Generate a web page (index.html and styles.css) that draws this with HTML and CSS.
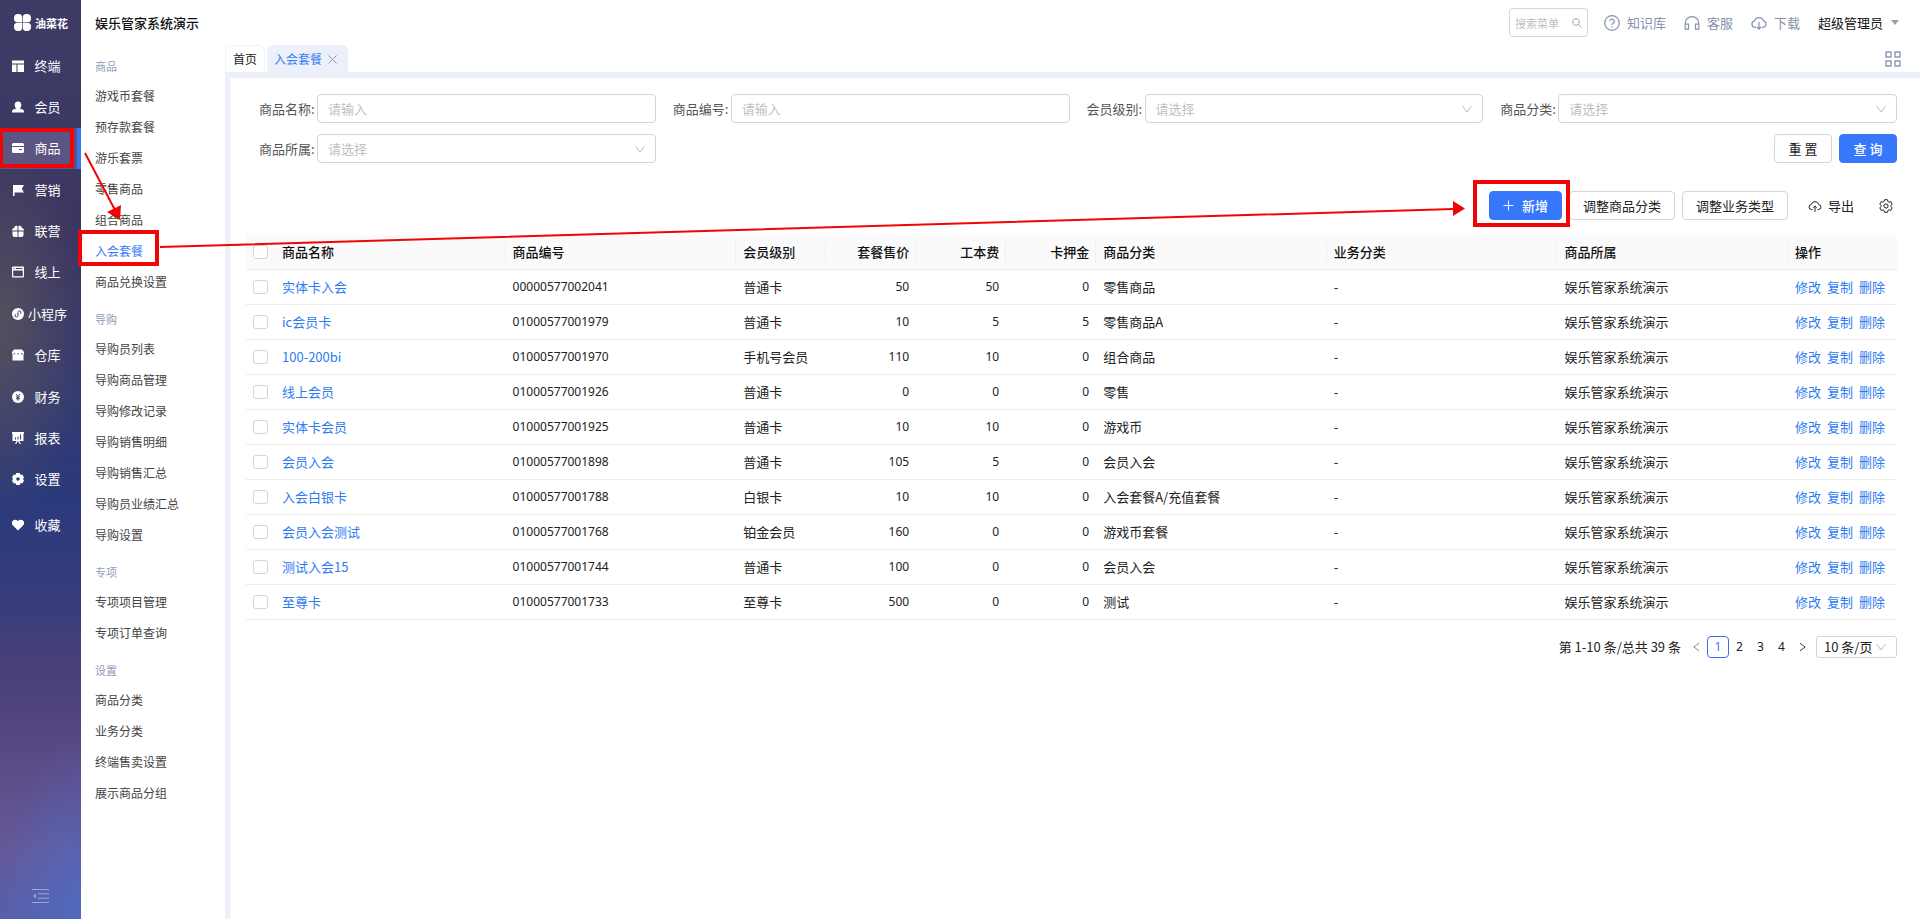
FILE: index.html
```html
<!DOCTYPE html>
<html lang="zh-CN">
<head>
<meta charset="utf-8">
<title>娱乐管家系统演示</title>
<link rel="stylesheet" href="styles.css">
</head>
<body>
<div class="app">
  <nav class="rail" aria-label="主菜单">
    <div class="logo">
      <svg class="logo-mark" viewBox="0 0 17 17" fill="#fff"><path d="M4 0h1a3.5 3.5 0 0 1 3.200 3.500v4.700H3.500A3.500 3.500 0 0 1 0 4.700V4a4 4 0 0 1 4-4z"/><path d="M13 0h-1a3.500 3.500 0 0 0-3.200 3.500v4.700h4.700A3.500 3.500 0 0 0 17 4.700V4a4 4 0 0 0-4-4z"/><path d="M4 17h1a3.500 3.500 0 0 0 3.200-3.500V8.800H3.500A3.500 3.500 0 0 0 0 12.300V13a4 4 0 0 0 4 4z"/><path d="M13 17h-1a3.500 3.500 0 0 1-3.200-3.500V8.800h4.700a3.500 3.500 0 0 1 3.500 3.500V13a4 4 0 0 1-4 4z"/></svg>
      <span>油菜花</span>
    </div>
    <div class="rail-list">
      <a class="rail-item" href="#"><svg viewBox="0 0 12 12"><path d="M0 0.500h12v3H0zM0 4.500h4.500V12H0zM5.500 4.500H12V12H5.500z"/></svg><span>终端</span></a>
      <a class="rail-item" href="#"><svg viewBox="0 0 12 12"><path d="M6 0.500a3.400 3.400 0 0 1 3.300 3.500c0 1.700-.8 2.800-1.800 3.600 2.500.4 4.500 1.400 4.500 2.600V11.500H0v-1.300c0-1.200 2-2.200 4.500-2.600C3.500 6.800 2.700 5.700 2.700 4A3.400 3.400 0 0 1 6 .5z"/></svg><span>会员</span></a>
      <a class="rail-item active" href="#"><svg viewBox="0 0 12 12"><path fill-rule="evenodd" d="M1.500 1h9A1.500 1.500 0 0 1 12 2.500V4H0V2.500A1.500 1.500 0 0 1 1.500 1zM0 5h12v4.500a1.500 1.500 0 0 1-1.500 1.500h-9A1.500 1.500 0 0 1 0 9.500zm7 2v1h3V7z"/></svg><span>商品</span></a>
      <a class="rail-item" href="#"><svg viewBox="0 0 12 12"><path d="M1 1h11L9.800 4.800 12 8.500H2.500V12H1z"/></svg><span>营销</span></a>
      <a class="rail-item" href="#"><svg viewBox="0 0 12 12"><path d="M5.500 1v4.500H0C0 4 1 3.200 2.200 3 2.200 1.500 3.500.300 5.500 1zM6.500 1C8.500.3 9.800 1.500 9.800 3 11 3.200 12 4 12 5.500H6.500zM.500 6.500h5V12h-3a2 2 0 0 1-2-2zM6.500 6.500h5V10a2 2 0 0 1-2 2h-3z"/></svg><span>联营</span></a>
      <a class="rail-item" href="#"><svg viewBox="0 0 12 12"><path fill-rule="evenodd" d="M1 .500h10a1 1 0 0 1 1 1v9a1 1 0 0 1-1 1H1a1 1 0 0 1-1-1v-9a1 1 0 0 1 1-1zM1.200 4.500v5.800h9.600V4.500zM1.500 2v1h1V2zM4 2v1h6.500V2z"/></svg><span>线上</span></a>
      <a class="rail-item" href="#"><svg viewBox="0 0 12 12"><circle cx="6" cy="6" r="6"/><path class="cut" d="M6 7.800a1.500 1.500 0 1 1-1.800-1.600M6 7.800V4.200a1.500 1.500 0 1 1 1.800 1.600"/></svg><span>小程序</span></a>
      <a class="rail-item" href="#"><svg viewBox="0 0 12 12"><path d="M2 .500h8L12 3v2H0V3zM.500 5h11v6.500H.500z"/><path class="cut" d="M1.500 4.800h1.500M5.300 4.800h1.500M9 4.800h1.500"/></svg><span>仓库</span></a>
      <a class="rail-item" href="#"><svg viewBox="0 0 12 12"><circle cx="6" cy="6" r="6"/><path class="cut" d="M4 3l2 2.500L8 3M6 5.500V9.500M4 6h4M4 7.700h4"/></svg><span>财务</span></a>
      <a class="rail-item" href="#"><svg viewBox="0 0 12 12"><path d="M0 0h12v1.500h-.5V9H7.500L9 12H7.700L6.500 9.500h-1L4.300 12H3l1.500-3h-4V1.500H0z"/><path class="cut" d="M3.500 5.500v2M6 4.500v3M8.500 2.500v5"/></svg><span>报表</span></a>
      <a class="rail-item" href="#"><svg viewBox="0 0 12 12"><path fill-rule="evenodd" d="M4.300 0h3.400l.8 1.700 2 .1L12 4.500 11 6l1 1.500-1.500 2.700-2 .1L7.700 12H4.300l-.8-1.700-2-.1L0 7.500 1 6 0 4.500l1.500-2.700 2-.1zM6 4.200a1.800 1.800 0 1 0 0 3.600 1.800 1.800 0 0 0 0-3.600z"/></svg><span>设置</span></a>
    </div>
    <a class="rail-item rail-fav" href="#"><svg viewBox="0 0 12 12"><path d="M6 11.500L1 6.500A3.200 3.200 0 0 1 1 1.600a3.400 3.400 0 0 1 5 .4 3.400 3.400 0 0 1 5-.4 3.200 3.200 0 0 1 0 4.900z"/></svg><span>收藏</span></a>
    <button class="rail-fold" aria-label="收起菜单"><svg viewBox="0 0 17 14" fill="none" stroke="#a3a6d4"><path d="M0 .5h17M6 4.800h11M6 9.200h11M0 13.500h17"/><path d="M4 4.500v5L1 7z" fill="#a3a6d4" stroke="none"/></svg></button>
  </nav>

  <div class="shell">
    <header class="topbar">
      <h1>娱乐管家系统演示</h1>
      <div class="tools">
        <label class="search"><input type="text" placeholder="搜索菜单" aria-label="搜索菜单"><svg viewBox="0 0 10 10" fill="none" stroke="#a3a8b8"><circle cx="4" cy="4" r="3.300"/><path d="M6.500 6.500L9.600 9.600"/></svg></label>
        <a class="tool" href="#"><svg viewBox="0 0 16 16"><circle cx="8" cy="8" r="7.300"/><path d="M5.800 6.300a2.200 2.200 0 1 1 3.400 1.900C8.300 8.800 8 9.200 8 10M8 11.200v1.200"/></svg>知识库</a>
        <a class="tool" href="#"><svg viewBox="0 0 16 16"><path d="M1.200 14V8a6.800 6.300 0 0 1 13.600 0v6M1.200 9.200h3.300v5H1.200zM11.500 9.200h3.300v5h-3.300z"/></svg>客服</a>
        <a class="tool" href="#"><svg viewBox="0 0 16 16"><path d="M5 12.300H3.800a3.200 3.200 0 0 1-.4-6.300A4.800 4.800 0 0 1 12.600 6a3.200 3.200 0 0 1-.4 6.300H11M8 7v7M5.800 11.900L8 14.200l2.200-2.300"/></svg>下载</a>
        <button class="user">超级管理员<i></i></button>
      </div>
    </header>

    <div class="body">
      <aside class="submenu">
        <section><h2>商品</h2><a href="#">游戏币套餐</a><a href="#">预存款套餐</a><a href="#">游乐套票</a><a href="#">零售商品</a><a href="#">组合商品</a><a class="current" href="#">入会套餐</a><a href="#">商品兑换设置</a></section>
        <section><h2>导购</h2><a href="#">导购员列表</a><a href="#">导购商品管理</a><a href="#">导购修改记录</a><a href="#">导购销售明细</a><a href="#">导购销售汇总</a><a href="#">导购员业绩汇总</a><a href="#">导购设置</a></section>
        <section><h2>专项</h2><a href="#">专项项目管理</a><a href="#">专项订单查询</a></section>
        <section><h2>设置</h2><a href="#">商品分类</a><a href="#">业务分类</a><a href="#">终端售卖设置</a><a href="#">展示商品分组</a></section>
      </aside>

      <div class="workspace">
        <div class="tabs">
          <a class="tab" href="#">首页</a>
          <a class="tab selected" href="#">入会套餐<svg viewBox="0 0 9 9" fill="none" stroke="#8c96ad"><path d="M.5.5l8 8M8.500.500l-8 8"/></svg></a>
          <button class="tabs-grid" aria-label="全部页签"><svg viewBox="0 0 16 16" fill="none" stroke="#8f9ab5" stroke-width="1.400"><path d="M1 1h5v5H1zM10 1h5v5h-5zM1 10h5v5H1zM10 10h5v5h-5z"/></svg></button>
        </div>

        <main class="page">
          <form class="filters">
            <div class="field"><label for="f1">商品名称:</label><input id="f1" class="control" type="text" placeholder="请输入"></div>
            <div class="field"><label for="f2">商品编号:</label><input id="f2" class="control" type="text" placeholder="请输入"></div>
            <div class="field"><label for="f3">会员级别:</label><select id="f3" class="control"><option>请选择</option></select><svg class="chev" viewBox="0 0 10 8"><path d="M.5 1L5 7l4.500-6"/></svg></div>
            <div class="field"><label for="f4">商品分类:</label><select id="f4" class="control"><option>请选择</option></select><svg class="chev" viewBox="0 0 10 8"><path d="M.5 1L5 7l4.500-6"/></svg></div>
            <div class="field"><label for="f5">商品所属:</label><select id="f5" class="control"><option>请选择</option></select><svg class="chev" viewBox="0 0 10 8"><path d="M.5 1L5 7l4.500-6"/></svg></div>
            <div class="filter-actions"><button type="button" class="btn">重 置</button><button type="button" class="btn primary">查 询</button></div>
          </form>

          <div class="toolbar">
            <button class="btn primary"><svg class="plus" viewBox="0 0 12 12"><path d="M6 .5v11M.5 6h11"/></svg>新增</button>
            <button class="btn">调整商品分类</button>
            <button class="btn">调整业务类型</button>
            <button class="plain export"><svg viewBox="0 0 14 14"><path d="M4.500 10.500H3.700a2.500 2.500 0 0 1-.3-5A3.700 3.700 0 0 1 10.600 5.500a2.500 2.500 0 0 1-.3 5H9.500M7 7V12.800M5.300 8.700L7 6.900l1.700 1.800"/></svg>导出</button>
            <button class="plain gear" aria-label="列设置"><svg viewBox="0 0 14 14"><path d="M5.600.7h2.800l.5 1.700 1.200.7 1.700-.5 1.400 2.500-1.200 1.200v1.400l1.200 1.200-1.400 2.500-1.700-.5-1.200.7-.5 1.700H5.600l-.5-1.700-1.200-.7-1.700.5L.800 8.900 2 7.700V6.300L.800 5.100l1.400-2.500 1.700.5 1.200-.7z"/><circle cx="7" cy="7" r="2.100"/></svg></button>
          </div>

          <table class="grid">
            <colgroup><col class="c-check"><col><col><col class="c-num"><col class="c-num"><col class="c-num"><col class="c-num"><col><col><col><col class="c-op"></colgroup>
            <thead><tr><th class="check"><input type="checkbox" aria-label="全选"></th><th>商品名称</th><th>商品编号</th><th>会员级别</th><th class="r">套餐售价</th><th class="r">工本费</th><th class="r">卡押金</th><th>商品分类</th><th>业务分类</th><th>商品所属</th><th>操作</th></tr></thead>
            <tbody>
              <tr><td class="check"><input type="checkbox" aria-label="选择"></td><td><a href="#">实体卡入会</a></td><td class="n">00000577002041</td><td>普通卡</td><td class="n r">50</td><td class="n r">50</td><td class="n r">0</td><td>零售商品</td><td>-</td><td>娱乐管家系统演示</td><td class="op"><a href="#">修改</a><a href="#">复制</a><a href="#">删除</a></td></tr>
              <tr><td class="check"><input type="checkbox" aria-label="选择"></td><td><a href="#">ic会员卡</a></td><td class="n">01000577001979</td><td>普通卡</td><td class="n r">10</td><td class="n r">5</td><td class="n r">5</td><td>零售商品A</td><td>-</td><td>娱乐管家系统演示</td><td class="op"><a href="#">修改</a><a href="#">复制</a><a href="#">删除</a></td></tr>
              <tr><td class="check"><input type="checkbox" aria-label="选择"></td><td><a href="#">100-200bi</a></td><td class="n">01000577001970</td><td>手机号会员</td><td class="n r">110</td><td class="n r">10</td><td class="n r">0</td><td>组合商品</td><td>-</td><td>娱乐管家系统演示</td><td class="op"><a href="#">修改</a><a href="#">复制</a><a href="#">删除</a></td></tr>
              <tr><td class="check"><input type="checkbox" aria-label="选择"></td><td><a href="#">线上会员</a></td><td class="n">01000577001926</td><td>普通卡</td><td class="n r">0</td><td class="n r">0</td><td class="n r">0</td><td>零售</td><td>-</td><td>娱乐管家系统演示</td><td class="op"><a href="#">修改</a><a href="#">复制</a><a href="#">删除</a></td></tr>
              <tr><td class="check"><input type="checkbox" aria-label="选择"></td><td><a href="#">实体卡会员</a></td><td class="n">01000577001925</td><td>普通卡</td><td class="n r">10</td><td class="n r">10</td><td class="n r">0</td><td>游戏币</td><td>-</td><td>娱乐管家系统演示</td><td class="op"><a href="#">修改</a><a href="#">复制</a><a href="#">删除</a></td></tr>
              <tr><td class="check"><input type="checkbox" aria-label="选择"></td><td><a href="#">会员入会</a></td><td class="n">01000577001898</td><td>普通卡</td><td class="n r">105</td><td class="n r">5</td><td class="n r">0</td><td>会员入会</td><td>-</td><td>娱乐管家系统演示</td><td class="op"><a href="#">修改</a><a href="#">复制</a><a href="#">删除</a></td></tr>
              <tr><td class="check"><input type="checkbox" aria-label="选择"></td><td><a href="#">入会白银卡</a></td><td class="n">01000577001788</td><td>白银卡</td><td class="n r">10</td><td class="n r">10</td><td class="n r">0</td><td>入会套餐A/充值套餐</td><td>-</td><td>娱乐管家系统演示</td><td class="op"><a href="#">修改</a><a href="#">复制</a><a href="#">删除</a></td></tr>
              <tr><td class="check"><input type="checkbox" aria-label="选择"></td><td><a href="#">会员入会测试</a></td><td class="n">01000577001768</td><td>铂金会员</td><td class="n r">160</td><td class="n r">0</td><td class="n r">0</td><td>游戏币套餐</td><td>-</td><td>娱乐管家系统演示</td><td class="op"><a href="#">修改</a><a href="#">复制</a><a href="#">删除</a></td></tr>
              <tr><td class="check"><input type="checkbox" aria-label="选择"></td><td><a href="#">测试入会15</a></td><td class="n">01000577001744</td><td>普通卡</td><td class="n r">100</td><td class="n r">0</td><td class="n r">0</td><td>会员入会</td><td>-</td><td>娱乐管家系统演示</td><td class="op"><a href="#">修改</a><a href="#">复制</a><a href="#">删除</a></td></tr>
              <tr><td class="check"><input type="checkbox" aria-label="选择"></td><td><a href="#">至尊卡</a></td><td class="n">01000577001733</td><td>至尊卡</td><td class="n r">500</td><td class="n r">0</td><td class="n r">0</td><td>测试</td><td>-</td><td>娱乐管家系统演示</td><td class="op"><a href="#">修改</a><a href="#">复制</a><a href="#">删除</a></td></tr>
            </tbody>
          </table>

          <div class="pager">
            <span class="total">第 1-10 条/总共 39 条</span>
            <button aria-label="上一页"><svg viewBox="0 0 8 10" stroke="#777"><path d="M7 .5L1 5l6 4.500"/></svg></button>
            <button class="on">1</button><button>2</button><button>3</button><button>4</button>
            <button aria-label="下一页"><svg viewBox="0 0 8 10" stroke="#222"><path d="M1 .5L7 5 1 9.500"/></svg></button>
            <div class="size"><select aria-label="每页条数"><option>10 条/页</option></select><svg class="chev" viewBox="0 0 10 8"><path d="M.5 1L5 7l4.500-6"/></svg></div>
          </div>
        </main>
      </div>
    </div>
  </div>

  <svg class="marks" width="1920" height="919" viewBox="0 0 1920 919" fill="none" stroke="#f00506" stroke-width="4">
    <rect x="1" y="130" width="71" height="36"/>
    <rect x="80" y="232" width="77" height="32"/>
    <rect x="1475" y="182" width="93" height="43"/>
    <path stroke-width="2" d="M85 153L115 210M160 247L1454 209"/>
    <path fill="#f00506" stroke="none" d="M120 220l-13-8 14-7zM1465 208.500l-12-7.500v15z"/>
  </svg>
</div>
</body>
</html>
```
FILE: styles.css
```css
* { box-sizing: border-box; }
body { margin: 0; font: 13px/20px "Noto Sans CJK SC", sans-serif; color: #222; background: #fff; }
a { color: inherit; text-decoration: none; }
h1, h2 { margin: 0; font-weight: 500; }
svg { display: block; flex: none; }
button, input, select { font: inherit; color: inherit; margin: 0; }
button { padding: 0; border: 0; background: none; cursor: pointer; white-space: nowrap; }

.app { position: relative; display: flex; min-height: 100vh; overflow: hidden; }

/* main menu rail */
.rail {
  flex: none; width: 81px; display: flex; flex-direction: column; color: #fff;
  background:
    radial-gradient(ellipse 90px 190px at 0 325px, rgba(90, 84, 92, .85), rgba(90, 84, 92, 0)),
    radial-gradient(ellipse 80px 180px at 100% 100%, rgba(80, 106, 190, .9), rgba(80, 106, 190, 0)),
    linear-gradient(180deg, #3e3c66 0, #3b3562 240px, #323a72 400px, #2b3a7b 500px, #333c7c 580px, #4b4079 680px, #5c4c88 770px, #66599a 850px, #5560ab 919px);
}
.logo { display: flex; align-items: center; gap: 4px; height: 45px; padding: 0 0 0 14px; font-size: 11px; font-weight: 700; }
.logo-mark { width: 17px; height: 17px; }
.rail-list { display: grid; grid-auto-rows: 1fr; height: 455px; }
.rail-item { display: flex; align-items: center; gap: 4px; padding-left: 12px; font-weight: 400; }
.rail-item svg { width: 12px; height: 12px; fill: #fff; }
.rail-item .cut { fill: none; stroke: #3c3d6c; }
.rail-item span { width: 39px; text-align: center; }
.rail-item.active { background: rgba(150, 140, 190, .35); border-right: 4px solid #3a78f2; }
.rail-fav { height: 41px; margin-top: 4px; }
.rail-fold { margin: auto auto 16px 32px; }
.rail-fold svg { width: 17px; height: 14px; }

.shell { flex: 1; min-width: 0; display: flex; flex-direction: column; }

/* top bar */
.topbar { display: flex; justify-content: space-between; height: 45px; padding: 0 21px 0 14px; }
.topbar h1 { font-size: 13px; line-height: 45px; color: #111; }
.tools { display: flex; align-items: center; }
.search { display: flex; align-items: center; width: 79px; height: 29px; padding: 0 5px; border: 1px solid #d5d5d8; border-radius: 4px; margin-right: 16px; }
.search input { flex: 1; min-width: 0; padding: 0; border: 0; outline: 0; font-size: 11px; line-height: 20px; background: none; }
.search svg { width: 10px; height: 10px; }
.search input::placeholder, .control::placeholder { color: #bfbfbf; opacity: 1; }
.tool { display: flex; align-items: center; gap: 7px; margin-right: 18px; color: #8592ae; }
.tool svg { width: 16px; height: 16px; fill: none; stroke: #8592ae; stroke-width: 1.200; }
.user { display: flex; align-items: center; gap: 8px; color: #111; }
.user i { border: 4px solid transparent; border-top: 5px solid #98a2b6; border-bottom: 0; }

.body { flex: 1; display: flex; }

/* secondary menu */
.submenu { flex: none; width: 144px; padding: 8px 0 0 14px; font-size: 12px; color: #444; }
.submenu section { margin-bottom: 9px; }
.submenu h2 { font-size: 11px; font-weight: 400; line-height: 27px; color: #909cba; }
.submenu a { display: block; line-height: 31px; }
.submenu .current { color: #3b7bf6; }

.workspace { flex: 1; min-width: 0; display: flex; flex-direction: column; }
.tabs { display: flex; gap: 2px; height: 33px; border-bottom: 6px solid #ebf0fb; }
.tab { display: flex; align-items: center; gap: 6px; padding: 0 7px; border: 1px solid #f0f2f6; border-bottom: 0; border-radius: 6px 6px 0 0; font-size: 12px; color: #222; }
.tab.selected { padding: 0 10px 0 6px; background: #ebf0fb; border-color: #ebf0fb; color: #3b7bf6; }
.tab svg { width: 9px; height: 9px; }
.tabs-grid { margin: 0 19px 0 auto; }
.tabs-grid svg { width: 16px; height: 16px; }

.page { flex: 1; border-left: 5px solid #edf1f7; padding: 16px 23px 0 16px; }

/* filters */
.filters { display: grid; grid-template-columns: repeat(4, 1fr); gap: 11px 17px; padding-left: 13px; }
.field { position: relative; display: flex; align-items: center; }
.field label { flex: none; width: 58px; color: #555; }
.control { flex: 1; min-width: 0; height: 29px; padding: 0 10px; border: 1px solid #d5d5d5; border-radius: 4px; background: #fff; outline: 0; appearance: none; }
select.control { color: #bfbfbf; }
.chev { position: absolute; right: 11px; width: 10px; height: 8px; fill: none; stroke: #bdbdbd; pointer-events: none; }
.filter-actions { grid-column: 4; display: flex; justify-content: flex-end; gap: 7px; }

.btn { display: flex; align-items: center; gap: 8px; height: 29px; padding: 0 13px; border: 1px solid #d5d5d5; border-radius: 4px; background: #fff; }
.btn.primary { background: #3777fc; border-color: #3777fc; color: #fff; font-weight: 500; }
.filter-actions .btn { width: 58px; justify-content: center; padding: 0; }
.plus { width: 11px; height: 11px; stroke: #fff; fill: none; }

.toolbar { display: flex; justify-content: flex-end; align-items: center; gap: 7px; margin: 28px 0 15px; }
.plain { display: flex; align-items: center; gap: 6px; }
.plain svg { width: 14px; height: 14px; fill: none; stroke: #222; }
.export { margin: 0 18px 0 13px; }
.gear { margin-right: 4px; }

/* data table */
.grid { width: 100%; table-layout: fixed; border-collapse: separate; border-spacing: 0; }
.c-check { width: 29px; }
.c-num { width: 90px; }
.c-op { width: 109px; }
.grid th, .grid td { height: 35px; padding: 0 7px; border-bottom: 1px solid #ececec; text-align: left; white-space: nowrap; line-height: 20px; }
.grid th { position: relative; background: #fafafa; font-weight: 500; color: #111; }
.grid th:not(.check):not(:last-child)::after { content: ""; position: absolute; right: 0; top: 6px; height: 22px; border-right: 1px solid #f0f0f0; }
.grid .r { text-align: right; }
.grid td.n { font-family: "Noto Sans", sans-serif; font-size: 12px; }
.grid .check { padding: 0 0 0 7px; }
.grid a { color: #2e7bf2; }
.op a + a { margin-left: 6px; }
.grid input { display: block; appearance: none; width: 15px; height: 14px; border: 1px solid #d5d5d5; border-radius: 3px; background: #fff; }

/* pagination */
.pager { display: flex; justify-content: flex-end; align-items: center; margin-top: 16px; }
.total { margin-right: 5px; }
.pager button { display: flex; align-items: center; justify-content: center; width: 21px; height: 22px; font-family: "Noto Sans", sans-serif; font-size: 12px; }
.pager button svg { width: 7px; height: 10px; fill: none; }
.pager .on { width: 22px; border: 1px solid #3b6ff0; border-radius: 4px; color: #3b7bf6; }
.size { position: relative; display: flex; align-items: center; width: 81px; margin-left: 3px; }
.size select { width: 100%; height: 22px; padding: 0 7px; border: 1px solid #d5d5d5; border-radius: 3px; background: #fff; appearance: none; line-height: 20px; }

/* guide annotations drawn over the page */
.marks { position: absolute; left: 0; top: 0; pointer-events: none; }
```
